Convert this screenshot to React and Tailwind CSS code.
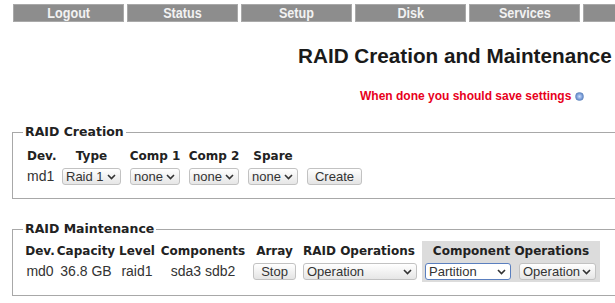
import React from "react";
import clsx from "clsx";

const tabs = ["Logout", "Status", "Setup", "Disk", "Services", "Power"];

const Chevron = () => (
  <svg width="9" height="6" viewBox="0 0 9 6" className="shrink-0">
    <polyline points="1,1 4.5,4.5 8,1" fill="none" stroke="#333" strokeWidth="1.6" />
  </svg>
);

// fake native select, same look as the old firefox widgets
const Select = ({ label, className, focus }) => (
  <span
    className={clsx(
      "inline-flex h-[17px] items-center justify-between rounded-[3px] border pl-[3px] pr-[4px] text-[13px] leading-none text-[#333]",
      focus
        ? "border-[#5a7fbf] bg-white"
        : "border-[#c2c2c2] bg-linear-to-b from-white to-[#e6e6e6]",
      className
    )}
  >
    <span>{label}</span>
    <Chevron />
  </span>
);

const Button = ({ label, className }) => (
  <span
    className={clsx(
      "inline-flex h-[17px] items-center justify-center rounded-[3px] border border-[#c2c2c2] bg-linear-to-b from-white to-[#e4e4e4] text-[13px] leading-none text-[#333]",
      className
    )}
  >
    {label}
  </span>
);

const head = "font-['DejaVu_Sans'] text-[12px] font-bold text-[#222] whitespace-nowrap";
const legend = "font-['DejaVu_Sans'] text-[12.5px] font-bold text-[#222] whitespace-nowrap px-[2px] leading-[14px]";
const cell = "flex items-center justify-center whitespace-nowrap";

const App = () => {
  return (
    <div className="h-[303px] w-[615px] overflow-hidden bg-white font-['Liberation_Sans'] text-[#333]">
      <div className="w-[760px]">
        {/* TOP MENU */}
        <div className="flex gap-[3px] pl-[13px] pt-[4px]">
          {tabs.map((t) => (
            <div
              key={t}
              className="flex h-[18px] w-[111px] shrink-0 items-center justify-center border border-[#a9a9a9] bg-[#8d8d8d]"
            >
              <span className="scale-x-90 text-[14px] font-bold leading-none text-[#f2f2f2]">{t}</span>
            </div>
          ))}
        </div>

        {/* TITLE */}
        <h1 className="mt-[22px] pl-[298px] text-[20.7px] font-bold leading-[24px] text-[#1a1a1a]">
          RAID Creation and Maintenance
        </h1>
        <div className="mt-[21px] flex items-center gap-[4px] pl-[360px]">
          <span className="text-[12px] font-bold leading-[14px] text-[#e8001c]">
            When done you should save settings
          </span>
          <span className="inline-block h-[9px] w-[9px] rounded-full border border-[#6d8fc4] bg-radial from-[#cfe0ff] to-[#3c6bb8]" />
        </div>

        {/* RAID CREATION */}
        <fieldset className="ml-[12px] mt-[22px] border border-[#a8a8a8] px-[10px] pb-[11px] pt-[7px]">
          <legend className={legend}>RAID Creation</legend>
          <div className="flex h-[20px] items-center">
            <div className={clsx(head, "w-[39px] pl-[4px]")}>Dev.</div>
            <div className={clsx(head, cell, "w-[59px]")}>Type</div>
            <div className={clsx(head, cell, "ml-[9px] w-[50px]")}>Comp 1</div>
            <div className={clsx(head, cell, "ml-[9px] w-[50px]")}>Comp 2</div>
            <div className={clsx(head, cell, "ml-[9px] w-[50px]")}>Spare</div>
          </div>
          <div className="flex h-[21px] items-center">
            <div className="w-[39px] pl-[4px] text-[14px]">md1</div>
            <Select label="Raid 1" className="w-[59px]" />
            <Select label="none" className="ml-[9px] w-[50px]" />
            <Select label="none" className="ml-[9px] w-[50px]" />
            <Select label="none" className="ml-[9px] w-[50px]" />
            <Button label="Create" className="ml-[9px] w-[55px]" />
          </div>
        </fieldset>

        {/* RAID MAINTENANCE */}
        <fieldset className="ml-[12px] mt-[23px] border border-[#a8a8a8] px-[10px] pb-[13px] pt-[5px]">
          <legend className={legend}>RAID Maintenance</legend>
          <div className="grid grid-cols-[34px_58px_44px_88px_55px_120px_178px] grid-rows-[20px_21px]">
            <div className={clsx(head, cell)}>Dev.</div>
            <div className={clsx(head, cell)}>Capacity</div>
            <div className={clsx(head, cell)}>Level</div>
            <div className={clsx(head, cell)}>Components</div>
            <div className={clsx(head, cell)}>Array</div>
            <div className={clsx(head, "flex items-center pl-[1px]")}>RAID Operations</div>
            <div className={clsx(head, cell, "bg-[#dcdcdc]")}>Component Operations</div>

            <div className={clsx(cell, "text-[14px]")}>md0</div>
            <div className={clsx(cell, "text-[14px]")}>36.8 GB</div>
            <div className={clsx(cell, "text-[14px]")}>raid1</div>
            <div className={clsx(cell, "text-[14px]")}>sda3 sdb2</div>
            <div className={cell}>
              <Button label="Stop" className="w-[43px]" />
            </div>
            <div className="flex items-center pl-[1px]">
              <Select label="Operation" className="w-[114px]" />
            </div>
            <div className="flex items-center gap-[8px] bg-[#dcdcdc] pl-[3px]">
              <Select label="Partition" focus className="w-[86px]" />
              <Select label="Operation" className="w-[77px]" />
            </div>
          </div>
        </fieldset>
      </div>
    </div>
  );
};

export default App;
